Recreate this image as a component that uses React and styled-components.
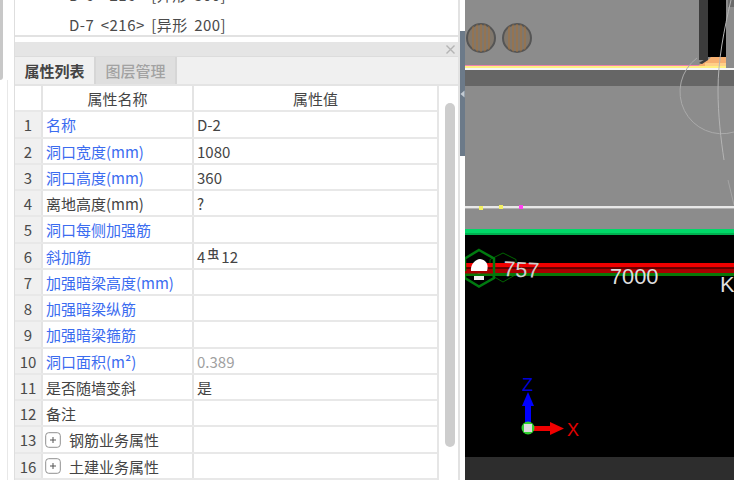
import React from "react";
import styled, { createGlobalStyle } from "styled-components";

const rows = [
  { no: 1, name: "名称", value: "D-2", link: true },
  { no: 2, name: "洞口宽度(mm)", value: "1080", link: true },
  { no: 3, name: "洞口高度(mm)", value: "360", link: true },
  { no: 4, name: "离地高度(mm)", value: "?" },
  { no: 5, name: "洞口每侧加强筋", link: true },
  { no: 6, name: "斜加筋", rebar: true, link: true },
  { no: 7, name: "加强暗梁高度(mm)", link: true },
  { no: 8, name: "加强暗梁纵筋", link: true },
  { no: 9, name: "加强暗梁箍筋", link: true },
  { no: 10, name: "洞口面积(m²)", value: "0.389", link: true, muted: true },
  { no: 11, name: "是否随墙变斜", value: "是" },
  { no: 12, name: "备注" },
  { no: 13, name: "钢筋业务属性", group: true },
  { no: 16, name: "土建业务属性", group: true },
];

const GlobalStyle = createGlobalStyle`
  html, body {
    margin: 0;
    height: 480px;
    overflow: hidden;
    background: #fff;
    font-family: "Noto Sans CJK SC", "Noto Sans", sans-serif;
  }
`;

const Page = styled.div`
  display: flex;
  width: 734px;
  height: 480px;
  overflow: hidden;
`;

const Gutter = styled.div`
  width: 14px;
  flex: none;
  display: flex;
  background: #fff;
`;

const GutterThumb = styled.div`
  width: 3px;
  height: 80px;
  background: #c8c8c8;
  border-bottom-right-radius: 3px;
`;

const GutterLine = styled.div`
  width: 1px;
  margin-left: 4px;
  background: #e8e8e8;
  margin-top: 80px;
`;

const Side = styled.div`
  width: 446px;
  flex: none;
  display: flex;
  flex-direction: column;
  box-sizing: border-box;
  border-right: 2px solid #e2e2e2;
  border-left: 1px solid #dedede;
`;

const TopList = styled.div`
  height: 37px;
  flex: none;
  display: flex;
  flex-direction: column;
  justify-content: flex-end;
  gap: 10px;
  overflow: hidden;
  box-sizing: border-box;
  border-bottom: 2px solid #e2e2e2;
  padding-left: 54px;
`;

const ListItem = styled.div`
  font-size: 15px;
  letter-spacing: 0.5px;
  word-spacing: 2.5px;
  line-height: 20px;
  height: 20px;
  flex: none;
  color: #4a4a4a;
  white-space: pre;
`;

const Gap = styled.div`
  height: 5px;
  flex: none;
`;

const TitleBar = styled.div`
  height: 15px;
  flex: none;
  display: flex;
  justify-content: flex-end;
  align-items: center;
  padding-right: 2px;
  box-sizing: border-box;
  background: #e5e5e5;
  border-bottom: 1px solid #dcdcdc;
`;

const TabBar = styled.div`
  height: 29px;
  flex: none;
  display: flex;
  box-sizing: border-box;
  background: #f0f0f0;
  border-bottom: 2px solid #e4e4e4;
`;

const Tab = styled.div`
  width: 81px;
  display: flex;
  align-items: center;
  justify-content: center;
  box-sizing: border-box;
  font-size: 15px;
  font-weight: ${(p) => (p.$active ? 700 : 500)};
  color: ${(p) => (p.$active ? "#444" : "#a2a2a2")};
  background: ${(p) => (p.$active ? "#f0f0f0" : "#dfdfdf")};
  border-right: 2px solid #d6d6d6;
`;

const Body = styled.div`
  flex: 1;
  display: flex;
  min-height: 0;
`;

const Grid = styled.div`
  width: 422px;
  flex: none;
  border-right: 2px solid #e6e6e6;
`;

const Row = styled.div`
  display: grid;
  grid-template-columns: 28px 151px 1fr;
  height: 26.25px;
  box-sizing: border-box;
  border-bottom: 2px solid #e8e8e8;
`;

const NoCell = styled.div`
  display: flex;
  align-items: center;
  justify-content: center;
  padding-top: 1px;
  font-size: 15px;
  color: #4a4a4a;
  background: ${(p) => (p.$head ? "#fff" : "#f0f0f0")};
  border-right: 2px solid #e4e4e4;
`;

const Cell = styled.div`
  display: flex;
  align-items: center;
  gap: 8px;
  padding: 1px 0 0 3px;
  font-size: 15px;
  white-space: nowrap;
  color: ${(p) => (p.$link ? "#3b6cf0" : p.$muted ? "#a0a0a0" : "#444")};
  border-right: ${(p) => (p.$last ? "none" : "2px solid #e4e4e4")};
`;

const HeadCell = styled(Cell)`
  justify-content: center;
  padding: 0;
`;

const RebarValue = styled.span`
  display: inline-flex;
  align-items: center;
`;

const RebarMark = styled.span`
  font-size: 12px;
  font-weight: 500;
  line-height: 1;
  margin: -4px 2px 0 2px;
`;

const Track = styled.div`
  flex: 1;
  background: #fff;
`;

const Thumb = styled.div`
  width: 10px;
  height: 344px;
  margin: 17px 0 0 6px;
  border-radius: 5px;
  background: #cdcdcd;
`;

const Splitter = styled.div`
  width: 5px;
  flex: none;
  background: #fff;
`;

const SplitterHandle = styled.div`
  height: 125px;
  margin-top: 31px;
  background: #6c7a89;
  display: flex;
  align-items: center;
  justify-content: center;
`;

const Viewport = styled.svg`
  flex: none;
  display: block;
  width: 269px;
  height: 480px;
`;

const PlusIcon = styled.svg`
  flex: none;
  margin-left: -1px;
`;

const CloseIcon = () => (
  <svg width="11" height="11" viewBox="0 0 11 11">
    <path d="M1.5 1.5l8 8M9.5 1.5l-8 8" stroke="#b4b4b4" strokeWidth="1.4" fill="none" />
  </svg>
);

const PlusBox = () => (
  <PlusIcon width="16" height="16" viewBox="0 0 16 16">
    <rect x="0.7" y="0.7" width="14.6" height="14.6" rx="3" fill="#fff" stroke="#909090" />
    <path d="M5 8h6M8 5v6" stroke="#555" strokeWidth="1" />
  </PlusIcon>
);

const Barrel = ({ cx, id }) => (
  <g>
    <clipPath id={id}>
      <circle cx={cx} cy="38" r="14" />
    </clipPath>
    <circle cx={cx} cy="38" r="14" fill="#80776c" stroke="#555" strokeWidth="2" />
    <g clipPath={`url(#${id})`} stroke="#a87238" strokeWidth="1">
      {[-8, -4, 0, 4, 8].map((d) => (
        <line key={d} x1={cx + d} y1="24" x2={cx + d} y2="52" />
      ))}
    </g>
  </g>
);

const Scene = () => (
  <Viewport viewBox="465 0 269 480">
    {/* upper, grey half of the model view */}
    <rect x="465" y="0" width="269" height="229" fill="#8c8c8c" />
    <Barrel cx={481} id="barrel-a" />
    <Barrel cx={517} id="barrel-b" />
    <rect x="699" y="0" width="9" height="60" fill="#3c3c3c" />
    <rect x="708" y="0" width="18" height="57" fill="#000" />
    <rect x="728" y="0" width="6" height="7" fill="#6a6a6a" />
    <path d="M699 65L708 60L711 57H726V68H699Z" fill="#f8b070" />
    <rect x="705" y="63" width="21" height="3" fill="#ffd088" />
    <path d="M699 63L707 58L708 60L702 64Z" fill="#3c3c3c" />
    <rect x="465" y="70" width="269" height="16" fill="#666" />
    <rect x="465" y="65" width="234" height="1" fill="#f080b0" />
    <rect x="465" y="66" width="261" height="2" fill="#fff080" />
    <rect x="465" y="68" width="269" height="2" fill="#f6f6f6" />
    <path d="M697 58A42 42 0 0 0 734 132" fill="none" stroke="#aaa" strokeWidth="1" />
    <path d="M731 0C724 30 718 60 718 90C718 115 721 140 724 160" fill="none" stroke="#b4b4b4" strokeWidth="1" />
    <path d="M728 180L734 205" stroke="#a4a4a4" strokeWidth="1" />
    <rect x="465" y="206" width="269" height="2.4" fill="#e8e8e8" />
    <rect x="479" y="206" width="4" height="4" fill="#f2f060" />
    <rect x="499" y="205" width="4" height="4" fill="#f2f060" />
    <rect x="519" y="205" width="4" height="4" fill="#ff40f0" />

    {/* lower, black half */}
    <rect x="465" y="235" width="269" height="222" fill="#000" />
    <rect x="465" y="229" width="269" height="4" fill="#00d868" />
    <rect x="465" y="233" width="269" height="2" fill="#00b050" />
    <rect x="465" y="457" width="269" height="23" fill="#2d2d2d" />

    <path d="M503 253L516 259.5V274.5L503 282L490 274.5V259.5Z" fill="none" stroke="#006400" strokeWidth="1" />
    <rect x="465" y="263" width="269" height="4.5" fill="#f00000" />
    <rect x="465" y="267.5" width="269" height="1.5" fill="#600000" />
    <rect x="465" y="269" width="269" height="4" fill="#a80000" />
    <rect x="465" y="273" width="269" height="3" fill="#087808" />
    <path d="M479 250L494 258.5V278L479 286.5L465 278V258.5Z" fill="none" stroke="#007a10" strokeWidth="2.5" />
    <path d="M471 271C470 264 476 259 480 259C486 260 489 264 487 271C483 274 475 274 471 271Z" fill="#fff" />
    <rect x="474" y="276" width="10" height="4" fill="#f0f0f0" />
    <rect x="465" y="271" width="28" height="2.5" fill="#a80000" />

    <text x="503" y="276" fontFamily="Liberation Sans" fontSize="21.5" fill="#cfcfcf" transform="rotate(3 503 276)">757</text>
    <text x="610" y="283.5" fontFamily="Liberation Sans" fontSize="21.8" fill="#dedede">7000</text>
    <text x="720" y="292" fontFamily="Liberation Sans" fontSize="21.8" fill="#dedede">K</text>

    {/* axis gizmo */}
    <rect x="525" y="404" width="6" height="22" fill="#0000ff" />
    <path d="M528 392L534 406H522Z" fill="#0000ff" />
    <rect x="530" y="426" width="22" height="5" fill="#f00000" />
    <path d="M564 428.5L550 422V435Z" fill="#f00000" />
    <circle cx="528" cy="428" r="6.5" fill="#30d030" />
    <rect x="524" y="424" width="8" height="8" fill="#dcdcdc" />
    <text x="522" y="391" fontFamily="Liberation Sans" fontSize="18" fill="#0000d8">Z</text>
    <text x="567" y="436" fontFamily="Liberation Sans" fontSize="18" fill="#e00000">X</text>
  </Viewport>
);

export default function App() {
  return (
    <Page>
      <GlobalStyle />
      <Gutter>
        <GutterThumb />
        <GutterLine />
      </Gutter>
      <Side>
        <TopList>
          <ListItem>{"D-6 <216> [异形 300]"}</ListItem>
          <ListItem>{"D-7 <216> [异形 200]"}</ListItem>
        </TopList>
        <Gap />
        <TitleBar>
          <CloseIcon />
        </TitleBar>
        <TabBar>
          <Tab $active>属性列表</Tab>
          <Tab>图层管理</Tab>
        </TabBar>
        <Body>
          <Grid>
            <Row>
              <NoCell $head />
              <HeadCell>属性名称</HeadCell>
              <HeadCell $last>属性值</HeadCell>
            </Row>
            {rows.map((r) => (
              <Row key={r.no}>
                <NoCell>{r.no}</NoCell>
                <Cell $link={r.link}>
                  {r.group && <PlusBox />}
                  {r.name}
                </Cell>
                <Cell $last $muted={r.muted}>
                  {r.rebar ? (
                    <RebarValue>
                      4<RebarMark>虫</RebarMark>12
                    </RebarValue>
                  ) : (
                    r.value
                  )}
                </Cell>
              </Row>
            ))}
          </Grid>
          <Track>
            <Thumb />
          </Track>
        </Body>
      </Side>
      <Splitter>
        <SplitterHandle>
          <svg width="5" height="8" viewBox="0 0 5 8">
            <path d="M0.5 4L4.5 0.5V7.5Z" fill="#c4ccd4" />
          </svg>
        </SplitterHandle>
      </Splitter>
      <Scene />
    </Page>
  );
}
